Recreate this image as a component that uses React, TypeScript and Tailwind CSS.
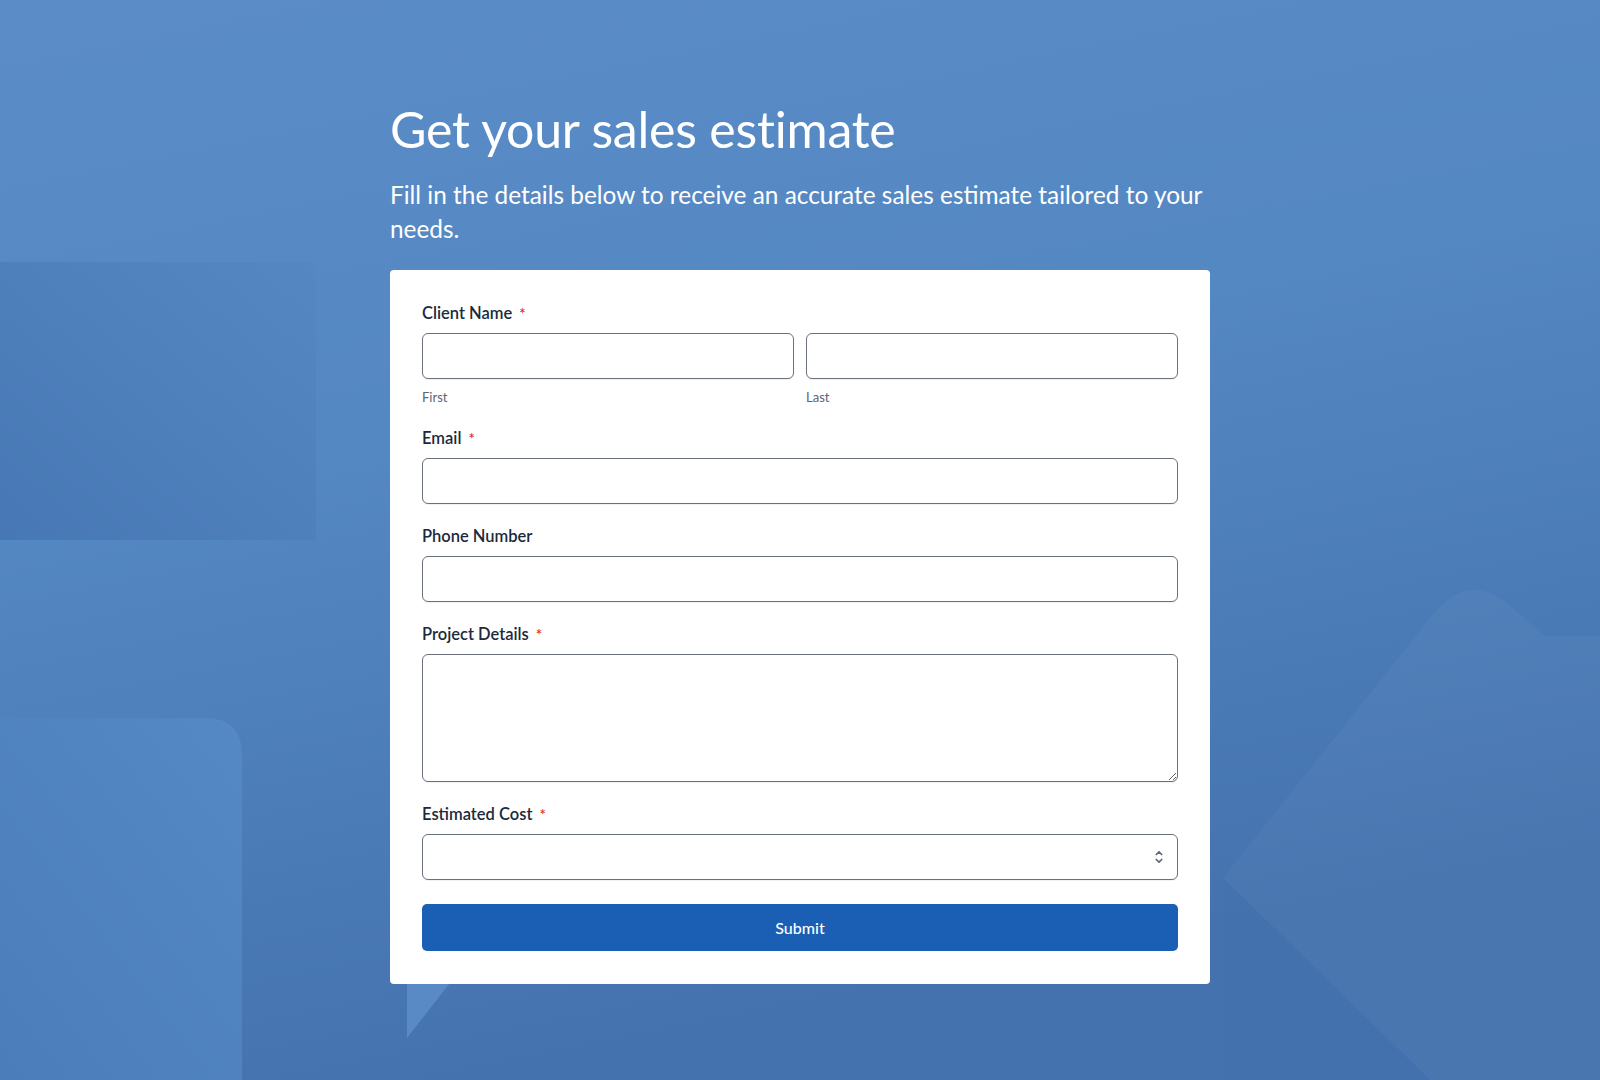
import React from "react";

function Req() {
  return <span className="ml-[7px] text-[15px] leading-none text-[#d93025]">*</span>;
}

function Label({ children, req }: { children: React.ReactNode; req?: boolean }) {
  return (
    <div className="mb-[10px] flex h-5 items-center text-[16.5px] leading-5 font-semibold text-[#1b2a3c]">
      <span>{children}</span>
      {req && <Req />}
    </div>
  );
}

const inputCls =
  "block w-full h-[46px] rounded-[6px] border border-[#6a707c] bg-white px-3 text-[16px] text-[#1b2a3c] shadow-[0_1px_1px_rgba(0,0,0,0.06)] outline-none";

function Background() {
  return (
    <svg
      className="absolute inset-0 h-full w-full"
      viewBox="0 0 1600 1080"
      preserveAspectRatio="none"
      aria-hidden="true"
    >
      <defs>
        <linearGradient id="bg" x1="0" y1="0" x2="0.3" y2="1">
          <stop offset="0" stopColor="#5b8cc7" />
          <stop offset="0.45" stopColor="#5488c3" />
          <stop offset="1" stopColor="#4472ae" />
        </linearGradient>
        <linearGradient id="dk" x1="1" y1="0" x2="0" y2="1">
          <stop offset="0" stopColor="#5588c3" />
          <stop offset="1" stopColor="#4778b5" />
        </linearGradient>
        <linearGradient id="lt" x1="1" y1="0" x2="0" y2="1">
          <stop offset="0" stopColor="#5489c5" />
          <stop offset="1" stopColor="#4a7cb9" />
        </linearGradient>
      </defs>
      <rect x="0" y="0" width="1600" height="1080" fill="url(#bg)" />
      <rect x="0" y="262" width="316" height="278" fill="url(#dk)" />
      <path d="M-40 718 L205 718 Q242 718 242 755 L242 1080 L-40 1080 Z" fill="url(#lt)" />
      <path d="M407 1038 L407 600 L749 600 Z" fill="#5a8ac6" />
      <path
        d="M1223 878 L1435 612 Q1470 572 1508 604 L1545 636 L1600 636 L1600 1080 L1430 1080 Z"
        fill="#ffffff"
        opacity="0.035"
      />
      <path d="M1223 878 L1430 1080 L1223 1080 Z" fill="#3d6aa6" opacity="0.1" />
    </svg>
  );
}

function Chevrons() {
  return (
    <svg
      className="pointer-events-none absolute right-[14px] top-1/2 -translate-y-1/2"
      width="10"
      height="16"
      viewBox="0 0 10 16"
      fill="none"
      stroke="#5f6774"
      strokeWidth="1.7"
      strokeLinecap="round"
      strokeLinejoin="round"
    >
      <path d="M2.3 5.5 L5 2.8 L7.7 5.5" />
      <path d="M2.3 10.5 L5 13.2 L7.7 10.5" />
    </svg>
  );
}

export default function App() {
  return (
    <div className="relative min-h-[1080px] w-full overflow-hidden font-['Lato','Noto_Sans',sans-serif]">
      <Background />
      <div className="relative z-10 mx-auto w-[820px] pt-[100px] pb-[96px]">
        <h1 className="text-[50px] leading-[58px] font-normal text-white tracking-[-0.2px]">
          Get your sales estimate
        </h1>
        <p className="mt-[20px] text-[24.4px] leading-[34px] font-normal text-white">
          Fill in the details below to receive an accurate sales estimate tailored to your needs.
        </p>
        <form className="mt-[24px] rounded-[4px] bg-white px-8 pt-[33px] pb-[33px]" onSubmit={(e) => e.preventDefault()}>
          <div className="mb-[23px]">
            <Label req>Client Name</Label>
            <div className="grid grid-cols-2 gap-3">
              <div>
                <input className={inputCls} type="text" />
                <div className="mt-[10px] text-[13px] leading-4 text-[#5b6573]">First</div>
              </div>
              <div>
                <input className={inputCls} type="text" />
                <div className="mt-[10px] text-[13px] leading-4 text-[#5b6573]">Last</div>
              </div>
            </div>
          </div>
          <div className="mb-[22px]">
            <Label req>Email</Label>
            <input className={inputCls} type="email" />
          </div>
          <div className="mb-[22px]">
            <Label>Phone Number</Label>
            <input className={inputCls} type="tel" />
          </div>
          <div className="mb-[22px]">
            <Label req>Project Details</Label>
            <textarea className="block w-full h-[128px] rounded-[6px] border border-[#6a707c] bg-white px-3 py-2 text-[16px] shadow-[0_1px_1px_rgba(0,0,0,0.06)] outline-none" />
          </div>
          <div className="mb-[24px]">
            <Label req>Estimated Cost</Label>
            <div className="relative">
              <select className={inputCls + " appearance-none"} defaultValue="">
                <option value=""></option>
                <option>$1,000 - $5,000</option>
                <option>$5,000 - $10,000</option>
                <option>$10,000+</option>
              </select>
              <Chevrons />
            </div>
          </div>
          <button
            type="submit"
            className="block h-[47px] w-full rounded-[5px] bg-[#1a5fb4] text-[16px] font-medium text-white"
          >
            Submit
          </button>
        </form>
      </div>
    </div>
  );
}
